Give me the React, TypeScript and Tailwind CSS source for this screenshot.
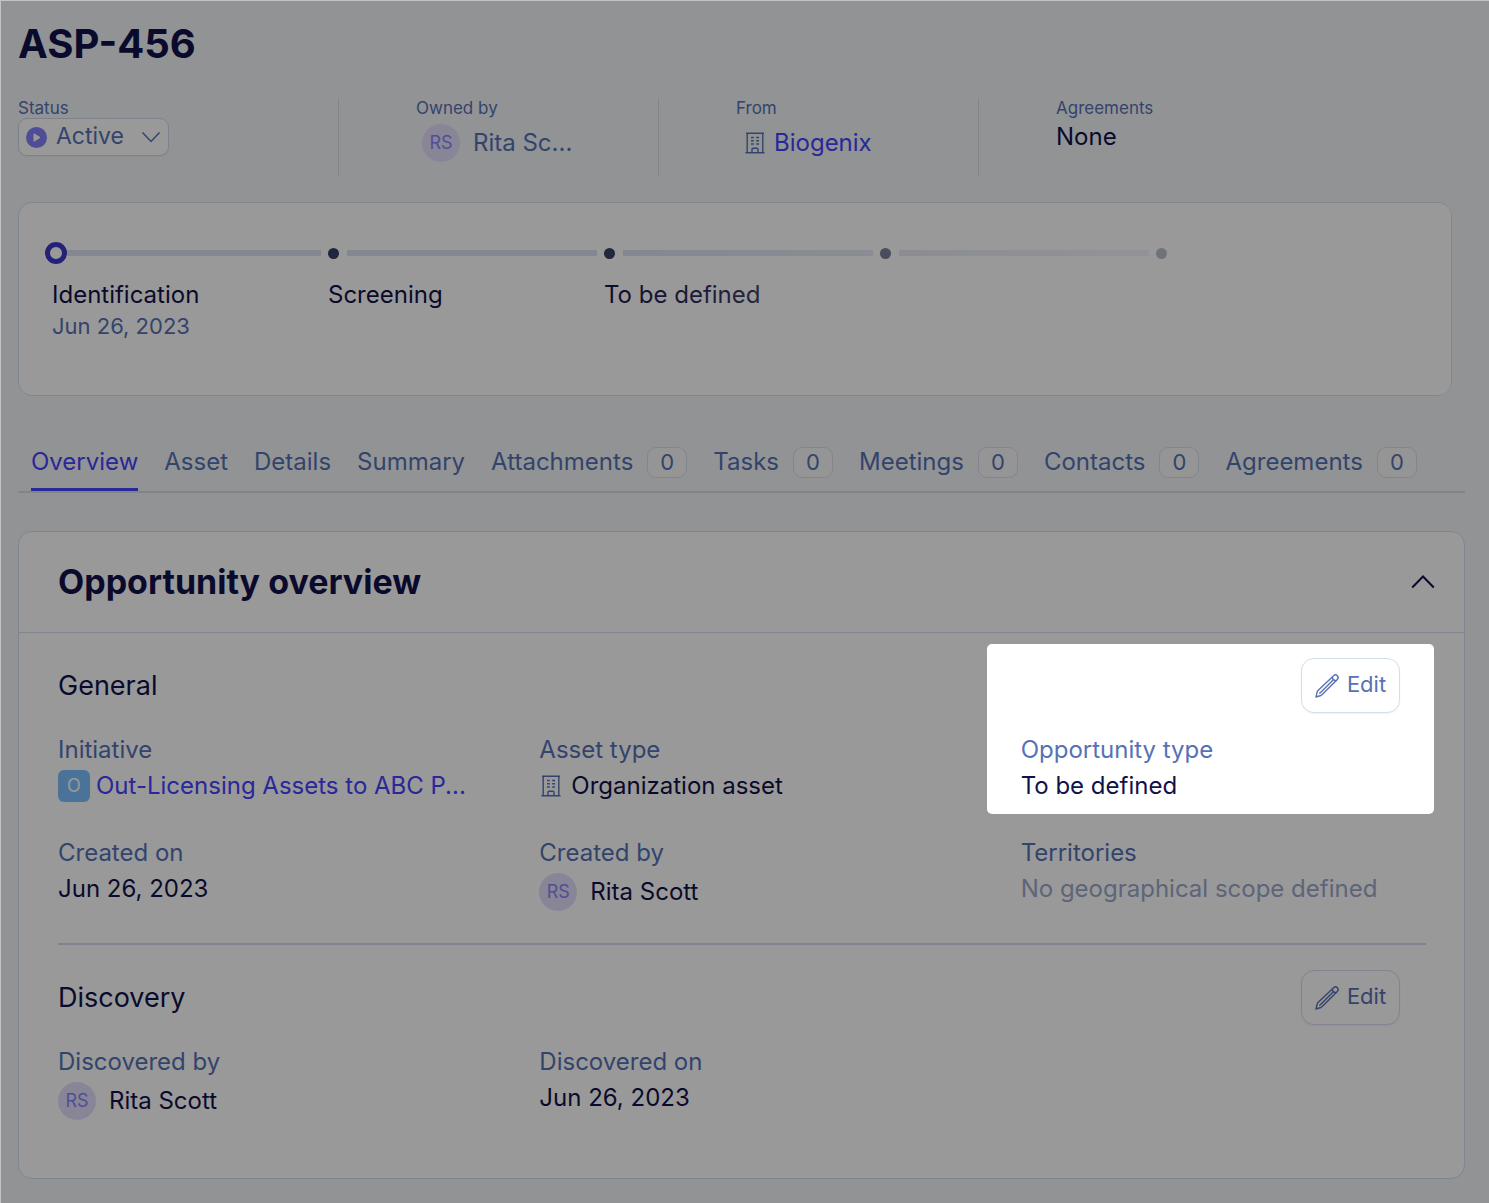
import React, { useState } from "react";

type Tab = { name: string; count?: number };

const tabs: Tab[] = [
  { name: "Overview" },
  { name: "Asset" },
  { name: "Details" },
  { name: "Summary" },
  { name: "Attachments", count: 0 },
  { name: "Tasks", count: 0 },
  { name: "Meetings", count: 0 },
  { name: "Contacts", count: 0 },
  { name: "Agreements", count: 0 },
];

const steps = [
  { title: "Identification", date: "Jun 26, 2023" },
  { title: "Screening" },
  { title: "To be defined" },
  { title: "" },
  { title: "" },
];

const BuildingIcon = () => (
  <svg
    className="h-[22px] w-5 shrink-0 text-[#5672b5]"
    viewBox="0 0 20 22"
    fill="none"
    stroke="currentColor"
    strokeWidth="1.4"
  >
    <path d="M1 1.2h18M0.5 20.8h19M2.2 1.2v19.6M17.8 1.2v19.6M7 20.8v-3.6q0-1 1-1h4q1 0 1 1v3.6" />
    <path d="M6 5.5h2.8M11.2 5.5h2.8M6 8.7h2.8M11.2 8.7h2.8M6 12h2.8M11.2 12h2.8" />
  </svg>
);

const PencilIcon = () => (
  <svg
    className="h-6 w-6 shrink-0"
    viewBox="0 0 24 24"
    fill="none"
    stroke="currentColor"
    strokeWidth="1.4"
    strokeLinecap="round"
    strokeLinejoin="round"
  >
    <path d="M1 23l1.2-5.2q.2-.8.8-1.4L18.6 1.7a2.4 2.4 0 0 1 3.7 3.7L7.2 20.6q-.6.6-1.4.9z" />
    <path d="M17.3 3.2q.2 3.2 3.5 3.6M4.8 19.2L17.6 6.5" />
  </svg>
);

const Avatar = () => (
  <span className="flex h-[38px] w-[38px] shrink-0 items-center justify-center rounded-full bg-[#e3e0fa] text-lg text-[#8783fa]">
    RS
  </span>
);

const EditButton = () => (
  <button
    type="button"
    className="flex h-[55px] w-[99px] items-center justify-center gap-2 rounded-[13px] border border-[#d5deef] bg-white text-[22px] text-[#5672b5] shadow-xs"
  >
    <PencilIcon />
    <span className="pb-[3px]">Edit</span>
  </button>
);

type FieldProps = { label: string; children: React.ReactNode };

const Field = ({ label, children }: FieldProps) => (
  <div className="min-w-0">
    <dt className="text-[#5672b5]">{label}</dt>
    <dd className="mt-1">{children}</dd>
  </div>
);

const HeaderItem = ({ label, children }: FieldProps) => (
  <div className="h-[78px] w-80 border-l border-[#d8dfec] pl-[77px] first:border-l-0 first:pl-0">
    <div className="text-[17px] leading-5 text-[#5672b5]">{label}</div>
    {children}
  </div>
);

const App = () => {
  const [active, setActive] = useState("Overview");
  const [open, setOpen] = useState(true);

  return (
    <div className="min-h-screen overflow-hidden border-t border-l border-[#c1c4c8] bg-[#f4f6f8] font-['Inter',sans-serif] text-2xl leading-8 text-[#12124a]">
      <main className="relative min-h-screen overflow-hidden pr-6 pl-[17px]">
        <h1 className="pt-[19px] text-[40px] leading-[48px] font-bold">
          ASP-456
        </h1>

        <div className="mt-[30px] flex">
          <HeaderItem label="Status">
            <button
              type="button"
              className="flex h-[38px] w-[151px] items-center rounded-[9px] border border-[#d0d8ea] bg-white px-[7px] text-[23px] text-[#5672b5] shadow-xs"
            >
              <svg className="h-[21px] w-[21px]" viewBox="0 0 21 21">
                <circle cx="10.5" cy="10.5" r="10.5" fill="#8480fb" />
                <path
                  d="M8 6.8v7.4l6-3.7z"
                  fill="#fff"
                  stroke="#fff"
                  strokeLinejoin="round"
                />
              </svg>
              <span className="ml-[9px] pb-[3px]">Active</span>
              <svg
                className="ml-auto h-5 w-5"
                viewBox="0 0 20 20"
                fill="none"
                stroke="currentColor"
                strokeWidth="1.5"
              >
                <path d="M1.5 5.5l8.5 9 8.5-9" />
              </svg>
            </button>
          </HeaderItem>
          <HeaderItem label="Owned by">
            <div className="mt-[6px] flex items-center gap-[13px] pl-[6px] text-[#5672b5]">
              <Avatar />
              Rita Sc...
            </div>
          </HeaderItem>
          <HeaderItem label="From">
            <div className="mt-[9px] flex items-center gap-[9px] pl-[9px]">
              <BuildingIcon />
              <a href="#biogenix" className="text-[#4642ff]">
                Biogenix
              </a>
            </div>
          </HeaderItem>
          <HeaderItem label="Agreements">
            <div className="mt-[3px]">None</div>
          </HeaderItem>
        </div>

        <ol className="relative mt-[26px] mr-[13px] flex h-[194px] overflow-hidden rounded-[14px] border border-[#d5deef] bg-white pt-[39px] pl-[33px]">
          {steps.map((step, i) => (
            <li key={i} className="w-[276px] shrink-0">
              <div className="flex h-[22px] items-center">
                {i === 0 ? (
                  <span className="-ml-[7px] h-[22px] w-[22px] rounded-full border-[5px] border-[#3c3ac9]" />
                ) : (
                  <span className="mr-2 h-[11px] w-[11px] rounded-full bg-[#344066]" />
                )}
                {i < steps.length - 1 && (
                  <span className="mr-[7px] h-[6px] flex-1 bg-[#dbe1f1]" />
                )}
              </div>
              <div className="mt-[15px]">{step.title}</div>
              {step.date && (
                <div className="text-[22px] leading-[30px] text-[#5672b5]">
                  {step.date}
                </div>
              )}
            </li>
          ))}
          <span className="absolute inset-y-0 right-0 left-[40%] bg-linear-to-r from-white/0 to-white" />
        </ol>

        <nav className="mt-[51px] flex gap-[26px] border-b-2 border-[#d5deea] pl-[13px]">
          {tabs.map((tab) => (
            <button
              key={tab.name}
              type="button"
              onClick={() => setActive(tab.name)}
              className={`flex h-11 items-start gap-[14px] border-b-[3px] leading-[30px] whitespace-nowrap ${
                active === tab.name
                  ? "border-[#4642ff] text-[#4642ff]"
                  : "border-transparent text-[#5672b5]"
              }`}
            >
              {tab.name}
              {tab.count !== undefined && (
                <span className="flex h-[31px] w-10 items-center justify-center rounded-[9px] border border-[#d8dfec] bg-[#f8f8fa] pb-[2px] text-[22px]">
                  {tab.count}
                </span>
              )}
            </button>
          ))}
        </nav>

        <section className="mt-[38px] rounded-[14px] border border-[#d5deef] bg-white">
          <div className="flex h-[101px] items-center justify-between border-b border-[#d5deef] pr-[29px] pl-[39px]">
            <h2 className="text-[34px] leading-10 font-bold">
              Opportunity overview
            </h2>
            <button
              type="button"
              aria-label="Toggle overview"
              onClick={() => setOpen(!open)}
            >
              <svg
                className="h-6 w-6"
                viewBox="0 0 24 24"
                fill="none"
                stroke="currentColor"
                strokeWidth="2"
              >
                <path d="M1.2 17.5L12 6.5l10.8 11" />
              </svg>
            </button>
          </div>

          {open && (
            <div className="relative pr-[38px] pb-[58px] pl-[39px]">
              <div className="border-b-2 border-[#d6dbee] pt-[25px] pb-8">
                <div className="flex items-center justify-between pr-[26px]">
                  <h3 className="text-[27px]">General</h3>
                  <EditButton />
                </div>
                <dl className="mt-[21px] grid grid-cols-3 gap-x-[76px] gap-y-[35px]">
                  <Field label="Initiative">
                    <div className="flex gap-[6px]">
                      <span className="flex h-8 w-8 shrink-0 items-center justify-center rounded-md bg-[#7dc0ff] text-lg text-white">
                        O
                      </span>
                      <a
                        href="#initiative"
                        className="whitespace-nowrap text-[#4642ff]"
                      >
                        Out-Licensing Assets to ABC P...
                      </a>
                    </div>
                  </Field>
                  <Field label="Asset type">
                    <div className="flex items-center gap-[10px] pl-[2px]">
                      <BuildingIcon />
                      Organization asset
                    </div>
                  </Field>
                  <Field label="Opportunity type">To be defined</Field>
                  <Field label="Created on">Jun 26, 2023</Field>
                  <Field label="Created by">
                    <div className="flex items-center gap-[13px]">
                      <Avatar />
                      Rita Scott
                    </div>
                  </Field>
                  <Field label="Territories">
                    <span className="whitespace-nowrap text-[#9ba8c8]">
                      No geographical scope defined
                    </span>
                  </Field>
                </dl>
              </div>

              <div className="pt-[25px]">
                <div className="flex items-center justify-between pr-[26px]">
                  <h3 className="text-[27px]">Discovery</h3>
                  <EditButton />
                </div>
                <dl className="mt-[21px] grid grid-cols-3 gap-x-[76px]">
                  <Field label="Discovered by">
                    <div className="flex items-center gap-[13px]">
                      <Avatar />
                      Rita Scott
                    </div>
                  </Field>
                  <Field label="Discovered on">Jun 26, 2023</Field>
                </dl>
              </div>

              {/* spotlight: everything outside this box is dimmed by its shadow */}
              <div className="pointer-events-none absolute top-[11px] right-[30px] h-[170px] w-[447px] rounded-[5px] shadow-[0_0_0_2000px_rgba(0,0,0,0.4)]" />
            </div>
          )}
        </section>
      </main>
    </div>
  );
};

export default App;
